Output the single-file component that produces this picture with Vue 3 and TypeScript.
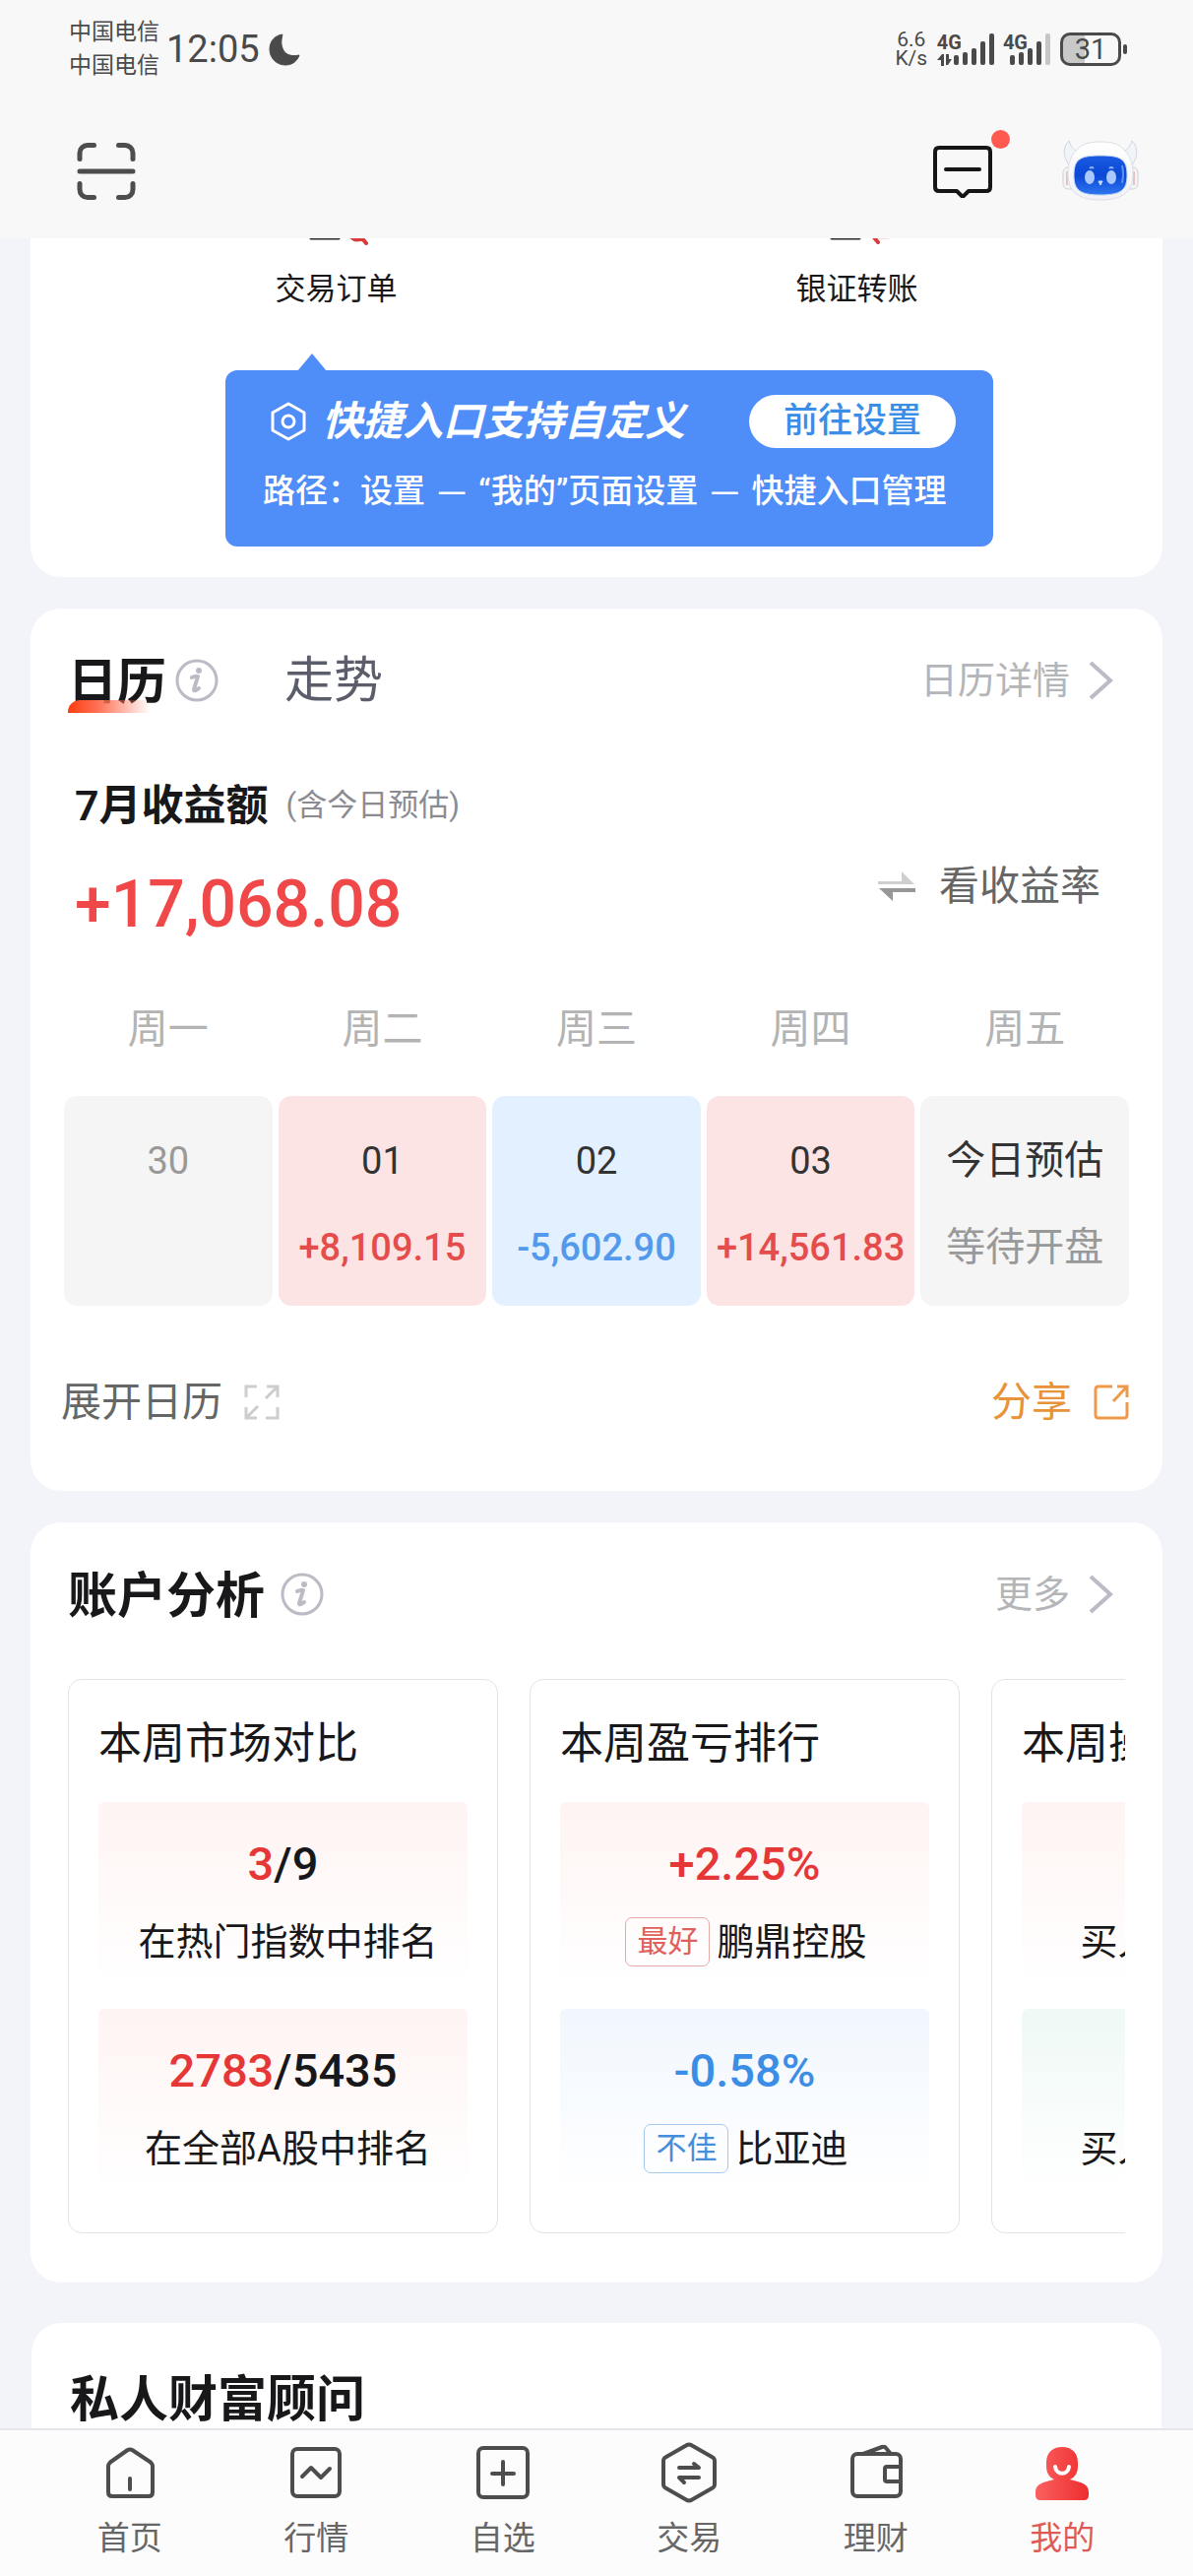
<script setup lang="ts">
interface DayCell {
  weekday: string
  day: string
  value: string
  tone: 'idle' | 'gain' | 'loss' | 'today'
}

interface Panel {
  tone: 'red' | 'blue' | 'green'
  lead: string
  rest: string
  tag: string
  label: string
}

interface AnalysisCard {
  title: string
  panels: Panel[]
}

interface Tab {
  id: string
  label: string
  active: boolean
}

const carriers: string[] = ['中国电信', '中国电信']
const fullBars: number[] = [10, 13, 17, 24, 32]

const days: DayCell[] = [
  { weekday: '周一', day: '30', value: '', tone: 'idle' },
  { weekday: '周二', day: '01', value: '+8,109.15', tone: 'gain' },
  { weekday: '周三', day: '02', value: '-5,602.90', tone: 'loss' },
  { weekday: '周四', day: '03', value: '+14,561.83', tone: 'gain' },
  { weekday: '周五', day: '今日预估', value: '等待开盘', tone: 'today' },
]

const analysis: AnalysisCard[] = [
  {
    title: '本周市场对比',
    panels: [
      { tone: 'red', lead: '3', rest: '/9', tag: '', label: '在热门指数中排名' },
      { tone: 'red', lead: '2783', rest: '/5435', tag: '', label: '在全部A股中排名' },
    ],
  },
  {
    title: '本周盈亏排行',
    panels: [
      { tone: 'red', lead: '+2.25%', rest: '', tag: '最好', label: '鹏鼎控股' },
      { tone: 'blue', lead: '-0.58%', rest: '', tag: '不佳', label: '比亚迪' },
    ],
  },
  {
    title: '本周操作评价',
    panels: [
      { tone: 'red', lead: '--', rest: '', tag: '', label: '买入后上涨个股' },
      { tone: 'green', lead: '--', rest: '', tag: '', label: '买入后下跌个股' },
    ],
  },
]

const tabs: Tab[] = [
  { id: 'home', label: '首页', active: false },
  { id: 'market', label: '行情', active: false },
  { id: 'watch', label: '自选', active: false },
  { id: 'trade', label: '交易', active: false },
  { id: 'wealth', label: '理财', active: false },
  { id: 'mine', label: '我的', active: true },
]
</script>

<template>
  <div class="screen">
    <header class="top">
      <div class="status">
        <div class="carriers">
          <span v-for="(c, i) in carriers" :key="i">{{ c }}</span>
        </div>
        <span class="clock">12:05</span>
        <svg class="moon" width="32" height="34" viewBox="0 0 32 34" aria-hidden="true">
          <path d="M14 2C6 3 1 9 1 17c0 9 7 16 16 16 7 0 12-4 14-10-9 2-15-1-17-7-2-5-1-10 0-14z" fill="#4a4a4a" stroke="#4a4a4a" stroke-linejoin="round" />
        </svg>
        <div class="status-right">
          <div class="speed"><span>6.6</span><span>K/s</span></div>
          <div class="signal">
            <div class="net">
              <span>4G</span>
              <svg width="15" height="12" viewBox="0 0 15 12" fill="#4a4a4a" aria-hidden="true">
                <path d="M5 0h2v12H4V6H0zM9 0h3v5h3l-4 6H9z" />
              </svg>
            </div>
            <svg class="bars" width="41" height="34" viewBox="0 0 41 34" aria-hidden="true">
              <rect v-for="(h, i) in fullBars" :key="i" :x="i * 9" :y="33 - h" width="5" :height="h" rx="2" fill="#4a4a4a" />
            </svg>
          </div>
          <div class="signal second">
            <div class="net"><span>4G</span></div>
            <svg class="bars" width="41" height="34" viewBox="0 0 41 34" aria-hidden="true">
              <rect v-for="(h, i) in fullBars" :key="i" :x="i * 9" :y="33 - h" width="5" :height="h" rx="2" :fill="i === 4 ? '#c6c6c6' : '#4a4a4a'" />
            </svg>
          </div>
          <div class="battery"><span>31</span></div>
        </div>
      </div>
      <div class="toolbar">
        <button class="icon-btn" type="button" aria-label="扫一扫">
          <svg width="60" height="60" viewBox="0 0 60 60" fill="none" stroke="#4d4d4d" stroke-width="5" stroke-linecap="round">
            <path d="M17.500 3.500H11a8 8 0 0 0-8 8v6M42.500 3.500H49a8 8 0 0 1 8 8v6M17.500 56.500H11a8 8 0 0 1-8-8v-6M42.500 56.500H49a8 8 0 0 0 8-8v-6M3 30h54" />
          </svg>
        </button>
        <div class="toolbar-right">
          <button class="icon-btn message" type="button" aria-label="消息">
            <svg width="60" height="54" viewBox="0 0 60 54" fill="none" stroke="#161618" stroke-width="4" stroke-linejoin="round" stroke-linecap="round">
              <path d="M6 3h48q4 0 4 4v36q0 4-4 4H36l-6 6-6-6H6q-4 0-4-4V7q0-4 4-4z" />
              <path d="M13 25h34" />
            </svg>
            <i class="dot"></i>
          </button>
          <button class="icon-btn" type="button" aria-label="智能助手">
            <svg width="80" height="64" viewBox="0 0 80 64">
              <defs>
                <linearGradient id="face" x1="0" y1="0" x2="0" y2="1">
                  <stop offset="0" stop-color="#1b5ae0" />
                  <stop offset=".5" stop-color="#0a48d6" />
                  <stop offset="1" stop-color="#2f77f0" />
                </linearGradient>
                <linearGradient id="shell" x1="0" y1="0" x2="0" y2="1">
                  <stop offset="0" stop-color="#ffffff" />
                  <stop offset="1" stop-color="#f0f2f6" />
                </linearGradient>
              </defs>
              <path d="M8 1C1 8 2 18 9 27l9-15C13 11 10 7 8 1zM72 1c7 7 6 17-1 26l-9-15c5-1 8-5 10-11z" fill="#f1f4f9" stroke="#d3d6dd" stroke-linejoin="round" />
              <rect x="2" y="28" width="12" height="22" rx="5" fill="#f4f4f6" stroke="#cfd1d6" />
              <rect x="66" y="28" width="12" height="22" rx="5" fill="#f4f4f6" stroke="#cfd1d6" />
              <path d="M6 32v14M74 32v14" stroke="#e3c4c2" stroke-width="2" />
              <path d="M40 2c11 0 19 2 24 8 7 7 9 15 9 25 0 18-11 26-33 26S7 53 7 35c0-10 2-18 9-25 5-6 13-8 24-8z" fill="url(#shell)" stroke="#dcdfe5" />
              <path d="M40 16c20 0 27 3 27 20 0 15-6 20-27 20s-27-5-27-20c0-17 7-20 27-20z" fill="url(#face)" stroke="#c9d6ee" />
              <ellipse cx="29" cy="38" rx="5" ry="7" fill="#a9c8fb" />
              <ellipse cx="51" cy="38" rx="5" ry="7" fill="#a9c8fb" />
              <path d="M29 29q2-2 4 0M49 29q2-2 4 0" fill="none" stroke="#8cb2f7" stroke-width="2" />
              <path d="M38 42l2 4 2-4z" fill="#c6dafd" stroke="#c6dafd" />
              <path d="M62 26q2 8 0 18" fill="none" stroke="#5b93f5" stroke-width="2" />
            </svg>
          </button>
        </div>
      </div>
    </header>

    <main class="content">
      <section class="card shortcuts">
        <div class="shortcut-row">
          <a class="shortcut" href="#orders">
            <svg width="64" height="8" viewBox="0 0 64 8" fill="none" stroke-linecap="round" aria-hidden="true">
              <path d="M6 0h28" stroke="#2b2b2d" stroke-width="3" />
              <path d="M46-2q7 7 13 0M57-1l5 6" stroke="#d83c3c" stroke-width="4" />
            </svg>
            <span>交易订单</span>
          </a>
          <a class="shortcut" href="#transfer">
            <svg width="64" height="8" viewBox="0 0 64 8" fill="none" stroke-linecap="round" aria-hidden="true">
              <path d="M6 0h28" stroke="#2b2b2d" stroke-width="3" />
              <path d="M48-2l5 6" stroke="#d83c3c" stroke-width="4" />
              <path d="M54 0h12" stroke="#f3c2c2" stroke-width="1" />
            </svg>
            <span>银证转账</span>
          </a>
        </div>
        <div class="tip">
          <div class="tip-head">
            <svg width="36" height="40" viewBox="0 0 36 40" fill="none" stroke="#fff" stroke-width="3" stroke-linejoin="round" aria-hidden="true">
              <path d="M18 2l16 9v18l-16 9-16-9V11z" />
              <circle cx="18" cy="20" r="6" />
            </svg>
            <strong>快捷入口支持自定义</strong>
            <button type="button">前往设置</button>
          </div>
          <p>路径：设置 <i>—</i> “我的”页面设置 <i>—</i> 快捷入口管理</p>
        </div>
      </section>

      <section class="card">
        <div class="card-head">
          <h2 class="tab-on">日历</h2>
          <svg class="info" width="44" height="44" viewBox="0 0 44 44" aria-hidden="true">
            <circle cx="22" cy="22" r="20" fill="none" stroke="#bbbbc6" stroke-width="3" />
            <circle cx="24" cy="12" r="3" fill="#bbbbc6" />
            <path d="M17 19q4-2 6-1l-4 13q0 3 5-1" fill="none" stroke="#bbbbc6" stroke-width="4" stroke-linecap="round" stroke-linejoin="round" />
          </svg>
          <button class="tab-off" type="button">走势</button>
          <a class="more" href="#calendar">
            日历详情
            <svg width="26" height="40" viewBox="0 0 26 40" fill="none" stroke="#bbbbc6" stroke-width="4" aria-hidden="true"><path d="M2 2l20 18L2 38" /></svg>
          </a>
        </div>
        <div class="month">
          <strong>7月收益额</strong>
          <span>(含今日预估)</span>
        </div>
        <div class="total">
          <span class="amount">+17,068.08</span>
          <button class="switch" type="button">
            <svg width="38" height="30" viewBox="0 0 38 30" aria-hidden="true">
              <path d="M0 10h24V0l13 13H0z" fill="#cfcfcf" />
              <path d="M38 21H15v9L1 17h37z" fill="#979797" />
            </svg>
            看收益率
          </button>
        </div>
        <table class="week">
          <thead>
            <tr><th v-for="d in days" :key="d.weekday" scope="col">{{ d.weekday }}</th></tr>
          </thead>
          <tbody>
            <tr>
              <td v-for="d in days" :key="d.weekday" :class="d.tone">
                <span class="day">{{ d.day }}</span>
                <span class="value">{{ d.value }}</span>
              </td>
            </tr>
          </tbody>
        </table>
        <div class="actions">
          <button type="button">
            展开日历
            <svg width="36" height="36" viewBox="0 0 36 36" fill="none" stroke="#cdcdcd" stroke-width="3" aria-hidden="true">
              <path d="M2 13V2h11M23 2h11v11M34 2L22 14M2 23v11h11M2 34l12-12M34 23v11H22" />
            </svg>
          </button>
          <button class="share" type="button">
            分享
            <svg width="36" height="36" viewBox="0 0 36 36" fill="none" stroke="#ee9a4c" stroke-width="3" aria-hidden="true">
              <path d="M19 2H5q-3 0-3 3v26q0 3 3 3h26q3 0 3-3V18M24 2h10v11M34 2L20 17" />
            </svg>
          </button>
        </div>
      </section>

      <section class="card analysis">
        <div class="card-head">
          <h2>账户分析</h2>
          <svg class="info wide" width="44" height="44" viewBox="0 0 44 44" aria-hidden="true">
            <circle cx="22" cy="22" r="20" fill="none" stroke="#bbbbc6" stroke-width="3" />
            <circle cx="24" cy="12" r="3" fill="#bbbbc6" />
            <path d="M17 19q4-2 6-1l-4 13q0 3 5-1" fill="none" stroke="#bbbbc6" stroke-width="4" stroke-linecap="round" stroke-linejoin="round" />
          </svg>
          <a class="more" href="#analysis">
            更多
            <svg width="26" height="40" viewBox="0 0 26 40" fill="none" stroke="#bbbbc6" stroke-width="4" aria-hidden="true"><path d="M2 2l20 18L2 38" /></svg>
          </a>
        </div>
        <div class="slider">
          <article v-for="a in analysis" :key="a.title" class="slide">
            <h3>{{ a.title }}</h3>
            <div v-for="p in a.panels" :key="p.label" class="panel" :class="p.tone">
              <div class="figure"><b>{{ p.lead }}</b>{{ p.rest }}</div>
              <div class="caption">
                <span v-if="p.tag" class="tag">{{ p.tag }}</span>
                <span class="label">{{ p.label }}</span>
              </div>
            </div>
          </article>
        </div>
      </section>

      <section class="card advisor">
        <h2>私人财富顾问</h2>
      </section>
    </main>

    <nav class="tabs">
      <a v-for="t in tabs" :key="t.id" :href="'#' + t.id" :class="{ active: t.active }">
        <svg width="60" height="62" viewBox="0 0 60 62" fill="none" stroke="#4d4d4d" stroke-width="4" stroke-linecap="round" stroke-linejoin="round" aria-hidden="true">
          <template v-if="t.id === 'home'">
            <path d="M27 8.500q3-2 6 0l18 12q2 2 2 4V51q0 4-4 4H12q-4 0-4-4V24.500q0-2 2-4z" />
            <path d="M30 37v11" />
          </template>
          <template v-else-if="t.id === 'market'">
            <rect x="6" y="7" width="48" height="48" rx="5" />
            <path d="M16 35l9-9 10 10 9-9" />
          </template>
          <template v-else-if="t.id === 'watch'">
            <rect x="5" y="6" width="50" height="50" rx="5" />
            <path d="M19 32h22M30 20v23" />
          </template>
          <template v-else-if="t.id === 'trade'">
            <path d="M27 3.500q3-2 6 0l21 12q2 1 2 4v23q0 3-2 4l-21 12q-3 2-6 0l-21-12q-2-1-2-4v-23q0-3 2-4z" />
            <path d="M20 26h20l-5-4M40 36H20l5 5" />
          </template>
          <template v-else-if="t.id === 'wealth'">
            <rect x="6" y="12" width="49" height="43" rx="5" />
            <path d="M17 12l19-7q3-1 4 1l5 6M54 25H41q-2 0-2 2v11q0 2 2 2h13" />
          </template>
          <template v-else>
            <defs>
              <linearGradient id="me" x1="0" y1="0" x2="1" y2="0">
                <stop offset="0" stop-color="#fb6060" />
                <stop offset="1" stop-color="#ee2d2d" />
              </linearGradient>
            </defs>
            <path d="M30 5c10 0 16 6 16 16v4c0 6-3 11-8 13 11 3 19 4 19 13v3q0 5-5 5H8q-5 0-5-5v-3c0-9 8-10 19-13-5-2-8-7-8-13v-4C14 11 20 5 30 5z" fill="url(#me)" stroke="none" />
            <path d="M23 25c1 9 13 9 14 0" stroke="#fff" />
          </template>
        </svg>
        <span>{{ t.label }}</span>
      </a>
    </nav>
  </div>
</template>

<style>
body {
  background: #f3f4f9;
}
</style>

<style scoped>
.screen {
  display: flex;
  flex-direction: column;
  height: 100vh;
  overflow: hidden;
  background: #f3f4f9;
  color: #18181a;
  font-family: Roboto, "Noto Sans CJK SC", sans-serif;
}
.screen * {
  box-sizing: border-box;
}
svg {
  display: block;
  flex: none;
}
button {
  padding: 0;
  border: 0;
  background: none;
  font: inherit;
  color: inherit;
}
a {
  color: inherit;
  text-decoration: none;
}
h2,
h3,
p {
  margin: 0;
}

/* status bar and toolbar */
.top {
  flex: none;
  background: #f8f8f8;
}
.status {
  display: flex;
  align-items: center;
  height: 98px;
  padding: 2px 67px 0 70px;
  color: #4a4a4a;
}
.carriers {
  display: flex;
  flex-direction: column;
  font-size: 23px;
  line-height: 34px;
}
.clock {
  margin-left: 7px;
  font-size: 38px;
  line-height: 48px;
}
.moon {
  margin-left: 9px;
}
.status-right {
  display: flex;
  align-items: center;
  margin-left: auto;
}
.speed {
  display: flex;
  flex-direction: column;
  width: 34px;
  font-size: 21px;
  line-height: 19px;
  text-align: center;
}
.signal {
  display: flex;
  height: 34px;
  margin-left: 9px;
}
.net {
  display: flex;
  flex-direction: column;
  gap: 2px;
  font-size: 20px;
  line-height: 20px;
  font-weight: 700;
}
.bars {
  margin-left: -8px;
}
.second .bars {
  margin-left: -18px;
}
.battery {
  position: relative;
  width: 62px;
  height: 34px;
  margin: 0 6px 0 10px;
  border: 3px solid #4a4a4a;
  border-radius: 10px;
  background: linear-gradient(90deg, #c8c8c8 40%, transparent 40%);
  font-size: 29px;
  line-height: 28px;
  text-align: center;
}
.battery::after {
  content: "";
  position: absolute;
  top: 9px;
  right: -9px;
  width: 4px;
  height: 10px;
  border-radius: 2px;
  background: #4a4a4a;
}
.toolbar {
  display: flex;
  align-items: center;
  justify-content: space-between;
  height: 144px;
  padding: 8px 54px 0 78px;
}
.toolbar-right {
  display: flex;
  align-items: center;
  gap: 70px;
}
.message {
  position: relative;
}
.dot {
  position: absolute;
  top: -15px;
  right: -18px;
  width: 19px;
  height: 19px;
  border-radius: 50%;
  background: #ff5a4f;
}

/* cards */
.content {
  flex: 1;
  min-height: 0;
  overflow: hidden;
}
.card {
  margin: 0 31px 32px;
  border-radius: 31px;
  background: #fff;
}
.shortcuts {
  border-radius: 0 0 31px 31px;
  padding-bottom: 31px;
}
.shortcut-row {
  display: flex;
  padding: 0 46px;
}
.shortcut {
  flex: 1;
  display: flex;
  flex-direction: column;
  align-items: center;
  gap: 24px;
  font-size: 31px;
  line-height: 40px;
}
.tip {
  position: relative;
  margin: 62px 172px 0 198px;
  padding: 25px 38px 34px;
  border-radius: 12px;
  background: #4f8df8;
  color: #fff;
}
.tip::before {
  content: "";
  position: absolute;
  top: -17px;
  left: 73px;
  border: solid transparent;
  border-width: 0 15px 18px;
  border-bottom-color: #4f8df8;
}
.tip-head {
  display: flex;
  align-items: center;
  padding-left: 8px;
}
.tip-head strong {
  margin-left: 16px;
  font-size: 41px;
  line-height: 54px;
  font-style: italic;
}
.tip-head button {
  width: 210px;
  height: 54px;
  margin-left: auto;
  border-radius: 27px;
  background: #fff;
  color: #3a8ee8;
  font-size: 35px;
  line-height: 54px;
  font-weight: 500;
}
.tip p {
  margin-top: 22px;
  font-size: 33px;
  line-height: 44px;
  font-weight: 500;
  white-space: nowrap;
}
.tip i {
  margin: 0 4px;
  font-family: "Noto Sans CJK SC", sans-serif;
  font-style: normal;
  line-height: 1;
}

.card-head {
  display: flex;
  align-items: center;
  height: 103px;
  padding: 43px 49px 0 38px;
}
h2 {
  padding-top: 4px;
  font-size: 50px;
  line-height: 60px;
  font-weight: 600;
}
.tab-on {
  position: relative;
}
.tab-on::after {
  content: "";
  position: absolute;
  left: 0;
  bottom: -1px;
  width: 84px;
  height: 13px;
  border-radius: 12px 0 0;
  background: linear-gradient(90deg, #fb3d12, #ff6f53 35%, rgba(255, 150, 130, 0));
}
.info {
  margin-left: 9px;
}
.info.wide {
  margin-left: 16px;
}
.tab-off {
  margin-left: 67px;
  color: #5c5d6b;
  font-size: 50px;
  line-height: 60px;
}
.more {
  display: flex;
  align-items: center;
  gap: 19px;
  margin-left: auto;
  color: #b4b5b9;
  font-size: 38px;
  line-height: 60px;
}
.month {
  display: flex;
  align-items: center;
  gap: 18px;
  margin-top: 72px;
  padding-left: 45px;
  line-height: 50px;
}
.month strong {
  font-size: 43px;
  font-weight: 600;
}
.month span {
  color: #8b8c92;
  font-size: 31px;
}
.total {
  display: flex;
  justify-content: space-between;
  align-items: flex-start;
  margin-top: 33px;
  padding: 0 63px 0 45px;
}
.amount {
  color: #f04848;
  font-size: 66px;
  line-height: 86px;
  font-weight: 500;
}
.switch {
  display: flex;
  align-items: center;
  gap: 24px;
  color: #666;
  font-size: 41px;
  line-height: 48px;
}
.week {
  width: calc(100% - 56px);
  margin: 53px 28px 0;
  border-spacing: 6px 0;
  table-layout: fixed;
  text-align: center;
}
.week th {
  padding: 0 0 38px;
  color: #b3b3b3;
  font-size: 41px;
  line-height: 60px;
  font-weight: 400;
}
.week td {
  height: 213px;
  padding: 38px 0 0;
  border-radius: 13px;
  vertical-align: top;
  font-size: 38px;
  line-height: 56px;
  color: #333;
  white-space: nowrap;
}
.week td span {
  display: block;
}
.week .value {
  margin-top: 32px;
  font-weight: 500;
}
.week .idle,
.week .today {
  background: #f5f5f5;
}
.week .idle {
  color: #999;
}
.week .gain {
  background: #fce4e4;
}
.week .gain .value {
  color: #e54d4d;
}
.week .loss {
  background: #e3f0ff;
}
.week .loss .value {
  color: #539aec;
}
.week .today {
  font-size: 40px;
}
.week .today .value {
  color: #999;
  font-weight: 400;
}
.actions {
  display: flex;
  justify-content: space-between;
  margin-top: 74px;
  padding: 0 34px 66px 31px;
}
.actions button {
  display: flex;
  align-items: center;
  gap: 22px;
  color: #666;
  font-size: 41px;
  line-height: 48px;
}
.actions .share {
  color: #e8923a;
}

.analysis {
  padding-bottom: 50px;
  margin-bottom: 41px;
}
.slider {
  display: flex;
  gap: 32px;
  margin: 56px 38px 0;
  overflow: hidden;
}
.slide {
  flex: none;
  width: 437px;
  padding: 35px 30px 41px;
  border: 1px solid #e3e3e5;
  border-radius: 14px;
}
.slide h3 {
  margin-bottom: 29px;
  font-size: 44px;
  line-height: 60px;
  font-weight: 400;
}
.panel {
  padding: 33px 0 19px;
  border-radius: 6px;
  text-align: center;
  white-space: nowrap;
}
.panel + .panel {
  margin-top: 24px;
}
.panel.red {
  background: linear-gradient(#fef4f3, #fff);
}
.panel.blue {
  background: linear-gradient(#f1f7fe, #fff);
}
.panel.green {
  background: linear-gradient(#eff9f5, #fff);
}
.figure {
  font-size: 47px;
  line-height: 60px;
  font-weight: 500;
}
.figure b {
  color: #e63737;
  font-weight: 500;
}
.blue .figure b {
  color: #3c8de6;
}
.green .figure b {
  color: #2fa874;
}
.caption {
  display: flex;
  align-items: center;
  justify-content: center;
  margin-top: 24px;
  padding-left: 3px;
  font-size: 38px;
  line-height: 50px;
}
.label {
  margin-left: 7px;
}
.tag {
  width: 86px;
  border: 1px solid #e5a9a7;
  border-radius: 7px;
  color: #e0605c;
  font-size: 31px;
  line-height: 48px;
}
.blue .tag {
  border-color: #a4c8ee;
  color: #458edb;
}
.advisor {
  margin: 0 32px;
  padding: 44px 39px 60px;
}

/* bottom tab bar */
.tabs {
  flex: none;
  display: flex;
  height: 150px;
  padding: 12px 38px 0 37px;
  border-top: 2px solid #e5e5ec;
  background: #fcfcfc;
}
.tabs a {
  flex: 1;
  display: flex;
  flex-direction: column;
  align-items: center;
  gap: 16px;
  color: #666;
  font-size: 33px;
  line-height: 40px;
}
.tabs .active {
  color: #e05a55;
}
</style>
